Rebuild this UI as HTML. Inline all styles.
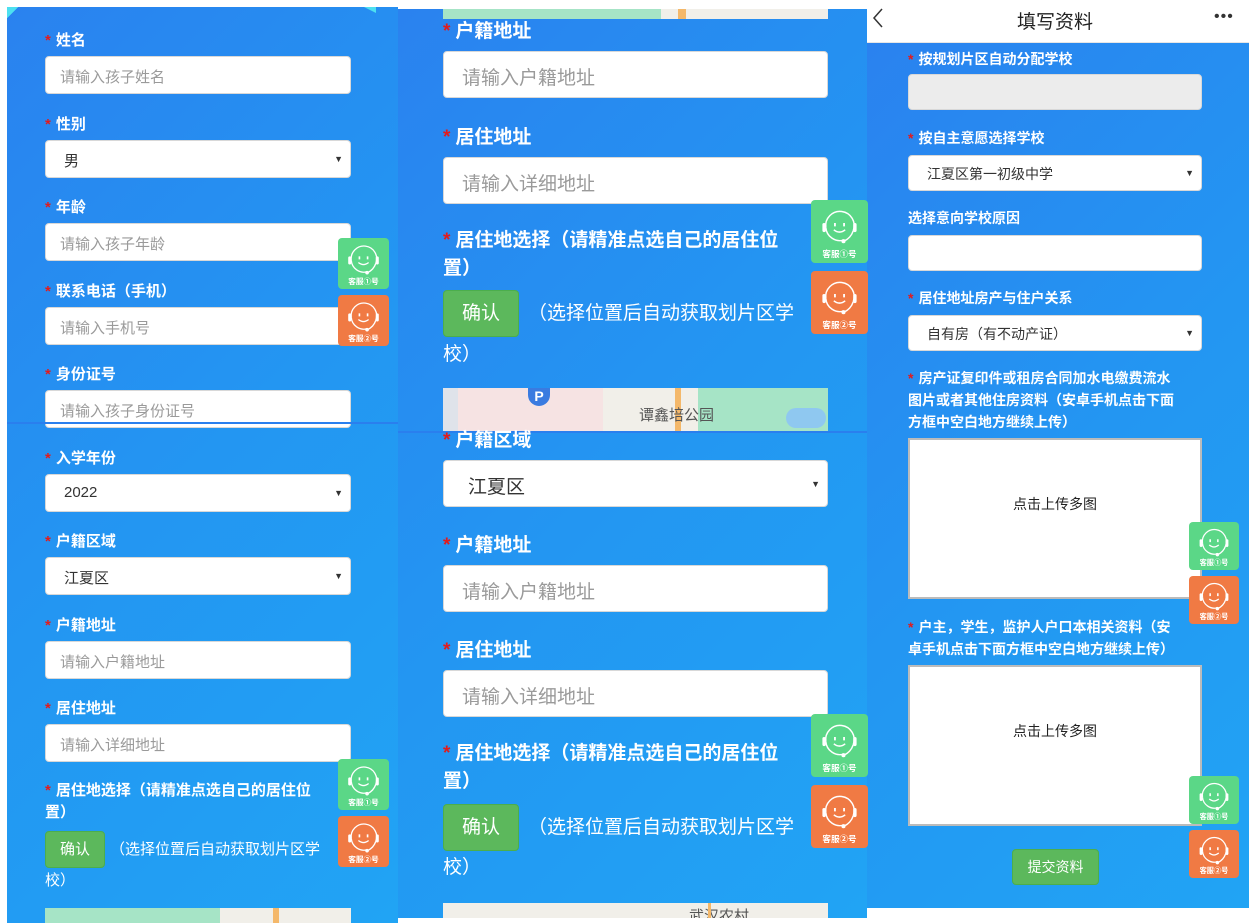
<!DOCTYPE html>
<html><head><meta charset="utf-8"><style>
*{margin:0;padding:0;box-sizing:border-box}
body{width:1249px;height:923px;background:#fff;position:relative;overflow:hidden;font-family:"Liberation Sans","Noto Sans CJK SC",sans-serif}
.p{position:absolute;background:linear-gradient(135deg,#2a82ef 0%,#2396f2 50%,#21a4f4 100%)}
.a{position:absolute;white-space:nowrap}
.l{position:absolute;color:#fff;font-weight:bold;white-space:nowrap}
.l b{color:#e31b1b;font-weight:bold;margin-right:5px}
.i{position:absolute;background:#fff;border-radius:4px;border:1px solid #d8d8d8;color:#9a9a9a;white-space:nowrap}
.s{color:#333}
.s:after{content:"▼";position:absolute;right:7px;top:50%;transform:translateY(-50%);color:#333;font-size:9px}
.btn{position:absolute;background:#5cb85c;color:#fff;border-radius:4px;border:1px solid #4cae4c;text-align:center}
.w{position:absolute;color:#fff;white-space:nowrap}
.map{position:absolute;overflow:hidden;background:#f1efe9}
.kf{position:absolute;border-radius:4px}
</style></head><body>

<!-- LEFT COLUMN -->
<div class="p" style="left:7px;top:7px;width:391px;height:916px"></div>
<div class="a" style="left:7px;top:7px;width:14px;height:14px;background:linear-gradient(135deg,#4de0f0 40%,transparent 40%)"></div>
<div class="a" style="left:364px;top:7px;width:12px;height:6px;background:#4de0f0;clip-path:polygon(0 0,100% 0,100% 100%)"></div>

<div class="l" style="left:45px;top:29px;font-size:15px"><b>*</b>姓名</div>
<div class="i" style="left:45px;top:56px;width:306px;height:38px;padding:9px 14px;font-size:15px">请输入孩子姓名</div>
<div class="l" style="left:45px;top:113px;font-size:15px"><b>*</b>性别</div>
<div class="i s" style="left:45px;top:140px;width:306px;height:38px;padding:9px 18px;font-size:15px">男</div>
<div class="l" style="left:45px;top:196px;font-size:15px"><b>*</b>年龄</div>
<div class="i" style="left:45px;top:223px;width:306px;height:38px;padding:9px 14px;font-size:15px">请输入孩子年龄</div>
<div class="l" style="left:45px;top:280px;font-size:15px"><b>*</b>联系电话（手机）</div>
<div class="i" style="left:45px;top:307px;width:306px;height:38px;padding:9px 14px;font-size:15px">请输入手机号</div>
<div class="l" style="left:45px;top:363px;font-size:15px"><b>*</b>身份证号</div>
<div class="i" style="left:45px;top:390px;width:306px;height:38px;padding:9px 14px;font-size:15px">请输入孩子身份证号</div>
<div class="a" style="left:7px;top:422px;width:391px;height:2px;background:#2a7fee"></div>
<div class="l" style="left:45px;top:447px;font-size:15px"><b>*</b>入学年份</div>
<div class="i s" style="left:45px;top:474px;width:306px;height:38px;padding:9px 18px;font-size:15px">2022</div>
<div class="l" style="left:45px;top:530px;font-size:15px"><b>*</b>户籍区域</div>
<div class="i s" style="left:45px;top:557px;width:306px;height:38px;padding:9px 18px;font-size:15px">江夏区</div>
<div class="l" style="left:45px;top:614px;font-size:15px"><b>*</b>户籍地址</div>
<div class="i" style="left:45px;top:641px;width:306px;height:38px;padding:9px 14px;font-size:15px">请输入户籍地址</div>
<div class="l" style="left:45px;top:697px;font-size:15px"><b>*</b>居住地址</div>
<div class="i" style="left:45px;top:724px;width:306px;height:38px;padding:9px 14px;font-size:15px">请输入详细地址</div>
<div class="l" style="left:45px;top:780px;font-size:15px;line-height:22px"><b>*</b>居住地选择（请精准点选自己的居住位<br>置）</div>
<div class="btn" style="left:45px;top:831px;width:60px;height:37px;line-height:35px;font-size:15px">确认</div>
<div class="w" style="left:110px;top:838px;font-size:15px">（选择位置后自动获取划片区学</div>
<div class="w" style="left:45px;top:869px;font-size:15px">校）</div>
<div class="map" style="left:45px;top:908px;width:306px;height:15px"><div class="a" style="left:0;top:0;width:175px;height:15px;background:#a6e4c6"></div><div class="a" style="left:228px;top:0;width:6px;height:15px;background:#f4b86a"></div></div>

<!-- MIDDLE COLUMN -->
<div class="p" style="left:398px;top:9px;width:469px;height:909px"></div>
<div class="map" style="left:443px;top:9px;width:385px;height:10px"><div class="a" style="left:0;top:0;width:218px;height:10px;background:#a6e4c6"></div><div class="a" style="left:235px;top:0;width:8px;height:10px;background:#f4b86a"></div></div>
<div class="l" style="left:443px;top:16px;font-size:19px"><b>*</b>户籍地址</div>
<div class="i" style="left:443px;top:51px;width:385px;height:47px;padding:11px 18px;font-size:19px">请输入户籍地址</div>
<div class="l" style="left:443px;top:122px;font-size:19px"><b>*</b>居住地址</div>
<div class="i" style="left:443px;top:157px;width:385px;height:47px;padding:11px 18px;font-size:19px">请输入详细地址</div>
<div class="l" style="left:443px;top:227px;font-size:19px;line-height:28px"><b>*</b>居住地选择（请精准点选自己的居住位<br>置）</div>
<div class="btn" style="left:443px;top:290px;width:76px;height:47px;line-height:45px;font-size:19px">确认</div>
<div class="w" style="left:528px;top:298px;font-size:19px">（选择位置后自动获取划片区学</div>
<div class="w" style="left:443px;top:339px;font-size:19px">校）</div>
<div class="map" style="left:443px;top:388px;width:385px;height:43px;background:#f6e3e3">
 <div class="a" style="left:0;top:0;width:15px;height:43px;background:#dfe3ea"></div>
 <div class="a" style="left:160px;top:0;width:110px;height:43px;background:#f1efe9"></div>
 <div class="a" style="left:255px;top:0;width:130px;height:43px;background:#a6e4c6"></div>
 <div class="a" style="left:343px;top:20px;width:40px;height:20px;background:#8fc8f0;border-radius:10px"></div>
 <div class="a" style="left:85px;top:0;width:22px;height:18px;background:#3a7be0;border-radius:0 0 11px 11px;color:#fff;font-weight:bold;font-size:14px;text-align:center">P</div>
 <div class="a" style="left:232px;top:0;width:6px;height:43px;background:#f4b86a"></div>
 <div class="a" style="left:196px;top:16px;font-size:15px;color:#555">谭鑫培公园</div>
</div>
<div class="a" style="left:398px;top:431px;width:469px;height:2px;background:#2a7fee"></div>
<div class="l" style="left:443px;top:425px;font-size:19px"><b>*</b>户籍区域</div>
<div class="i s" style="left:443px;top:460px;width:385px;height:47px;padding:11px 24px;font-size:19px">江夏区</div>
<div class="l" style="left:443px;top:530px;font-size:19px"><b>*</b>户籍地址</div>
<div class="i" style="left:443px;top:565px;width:385px;height:47px;padding:11px 18px;font-size:19px">请输入户籍地址</div>
<div class="l" style="left:443px;top:635px;font-size:19px"><b>*</b>居住地址</div>
<div class="i" style="left:443px;top:670px;width:385px;height:47px;padding:11px 18px;font-size:19px">请输入详细地址</div>
<div class="l" style="left:443px;top:740px;font-size:19px;line-height:28px"><b>*</b>居住地选择（请精准点选自己的居住位<br>置）</div>
<div class="btn" style="left:443px;top:804px;width:76px;height:47px;line-height:45px;font-size:19px">确认</div>
<div class="w" style="left:528px;top:812px;font-size:19px">（选择位置后自动获取划片区学</div>
<div class="w" style="left:443px;top:852px;font-size:19px">校）</div>
<div class="map" style="left:443px;top:903px;width:385px;height:15px"><div class="a" style="left:246px;top:2px;font-size:15px;color:#555">武汉农村</div><div class="a" style="left:265px;top:0;width:3px;height:15px;background:#f4b86a"></div></div>

<!-- RIGHT COLUMN -->
<div class="p" style="left:867px;top:43px;width:382px;height:865px"></div>
<div class="a" style="left:867px;top:0;width:382px;height:43px;background:#fff;border-bottom:1px solid #e6e6e6"></div>
<svg class="a" style="left:870px;top:7px" width="16" height="22"><path d="M12 2 L4 11 L12 20" fill="none" stroke="#333" stroke-width="1.5"/></svg>
<div class="a" style="left:1017px;top:7px;font-size:19px;color:#222">填写资料</div>
<div class="a" style="left:1214px;top:8px;font-size:16px;color:#333;letter-spacing:1px">•••</div>

<div class="l" style="left:908px;top:49px;font-size:14px"><b>*</b>按规划片区自动分配学校</div>
<div class="i" style="left:908px;top:74px;width:294px;height:36px;background:#ececec"></div>
<div class="l" style="left:908px;top:128px;font-size:14px"><b>*</b>按自主意愿选择学校</div>
<div class="i s" style="left:908px;top:155px;width:294px;height:36px;padding:8px 18px;font-size:14px">江夏区第一初级中学</div>
<div class="l" style="left:908px;top:208px;font-size:14px">选择意向学校原因</div>
<div class="i" style="left:908px;top:235px;width:294px;height:36px"></div>
<div class="l" style="left:908px;top:288px;font-size:14px"><b>*</b>居住地址房产与住户关系</div>
<div class="i s" style="left:908px;top:315px;width:294px;height:36px;padding:8px 18px;font-size:14px">自有房（有不动产证）</div>
<div class="l" style="left:908px;top:367px;font-size:14px;line-height:22px"><b>*</b>房产证复印件或租房合同加水电缴费流水<br>图片或者其他住房资料（安卓手机点击下面<br>方框中空白地方继续上传）</div>
<div class="a" style="left:908px;top:438px;width:294px;height:161px;background:#fff;border:2px solid #bbb;font-size:14px;color:#222;text-align:center;padding-top:54px">点击上传多图</div>
<div class="l" style="left:908px;top:616px;font-size:14px;line-height:22px"><b>*</b>户主，学生，监护人户口本相关资料（安<br>卓手机点击下面方框中空白地方继续上传）</div>
<div class="a" style="left:908px;top:665px;width:294px;height:161px;background:#fff;border:2px solid #bbb;font-size:14px;color:#222;text-align:center;padding-top:54px">点击上传多图</div>
<div class="btn" style="left:1012px;top:849px;width:87px;height:36px;line-height:34px;font-size:14px">提交资料</div>

<!-- service buttons -->
<svg width="0" height="0" style="position:absolute"><defs>
<g id="face" fill="none" stroke="#fff" stroke-width="1.3">
<path d="M13 22 A12.5 12.5 0 1 1 37 25"/>
<path d="M13 22 A12.5 12.5 0 0 0 29 33"/>
<path d="M37 25 Q35 31 29 34"/>
<rect x="10" y="18" width="3" height="8" rx="1.5" fill="#fff" stroke="none"/>
<rect x="37" y="18" width="3" height="8" rx="1.5" fill="#fff" stroke="none"/>
<path d="M20 24 Q25 28 30 24"/>
<path d="M21 18 v3 M29 18 v3" stroke-width="1.6"/>
<circle cx="28.5" cy="34" r="1.8" fill="#fff" stroke="none"/>
</g></defs></svg>

<div class="kf" style="left:338px;top:238px;width:51px;height:51px;background:#5bd787"><svg width="51" height="51" viewBox="0 0 50 50"><use href="#face"/><text x="25" y="45" fill="#fff" font-size="7.5" font-weight="bold" text-anchor="middle" font-family="Noto Sans CJK SC,sans-serif">客服①号</text></svg></div>
<div class="kf" style="left:338px;top:295px;width:51px;height:51px;background:#f07a44"><svg width="51" height="51" viewBox="0 0 50 50"><use href="#face"/><text x="25" y="45" fill="#fff" font-size="7.5" font-weight="bold" text-anchor="middle" font-family="Noto Sans CJK SC,sans-serif">客服②号</text></svg></div>
<div class="kf" style="left:338px;top:759px;width:51px;height:51px;background:#5bd787"><svg width="51" height="51" viewBox="0 0 50 50"><use href="#face"/><text x="25" y="45" fill="#fff" font-size="7.5" font-weight="bold" text-anchor="middle" font-family="Noto Sans CJK SC,sans-serif">客服①号</text></svg></div>
<div class="kf" style="left:338px;top:816px;width:51px;height:51px;background:#f07a44"><svg width="51" height="51" viewBox="0 0 50 50"><use href="#face"/><text x="25" y="45" fill="#fff" font-size="7.5" font-weight="bold" text-anchor="middle" font-family="Noto Sans CJK SC,sans-serif">客服②号</text></svg></div>

<div class="kf" style="left:811px;top:200px;width:57px;height:63px;background:#5bd787"><svg width="57" height="63" viewBox="0 0 50 55"><use href="#face" transform="translate(0,2)"/><text x="25" y="50" fill="#fff" font-size="7.5" font-weight="bold" text-anchor="middle" font-family="Noto Sans CJK SC,sans-serif">客服①号</text></svg></div>
<div class="kf" style="left:811px;top:271px;width:57px;height:63px;background:#f07a44"><svg width="57" height="63" viewBox="0 0 50 55"><use href="#face" transform="translate(0,2)"/><text x="25" y="50" fill="#fff" font-size="7.5" font-weight="bold" text-anchor="middle" font-family="Noto Sans CJK SC,sans-serif">客服②号</text></svg></div>
<div class="kf" style="left:811px;top:714px;width:57px;height:63px;background:#5bd787"><svg width="57" height="63" viewBox="0 0 50 55"><use href="#face" transform="translate(0,2)"/><text x="25" y="50" fill="#fff" font-size="7.5" font-weight="bold" text-anchor="middle" font-family="Noto Sans CJK SC,sans-serif">客服①号</text></svg></div>
<div class="kf" style="left:811px;top:785px;width:57px;height:63px;background:#f07a44"><svg width="57" height="63" viewBox="0 0 50 55"><use href="#face" transform="translate(0,2)"/><text x="25" y="50" fill="#fff" font-size="7.5" font-weight="bold" text-anchor="middle" font-family="Noto Sans CJK SC,sans-serif">客服②号</text></svg></div>

<div class="kf" style="left:1189px;top:522px;width:50px;height:48px;background:#5bd787"><svg width="50" height="48" viewBox="0 0 50 50"><use href="#face"/><text x="25" y="45" fill="#fff" font-size="7.5" font-weight="bold" text-anchor="middle" font-family="Noto Sans CJK SC,sans-serif">客服①号</text></svg></div>
<div class="kf" style="left:1189px;top:576px;width:50px;height:48px;background:#f07a44"><svg width="50" height="48" viewBox="0 0 50 50"><use href="#face"/><text x="25" y="45" fill="#fff" font-size="7.5" font-weight="bold" text-anchor="middle" font-family="Noto Sans CJK SC,sans-serif">客服②号</text></svg></div>
<div class="kf" style="left:1189px;top:776px;width:50px;height:48px;background:#5bd787"><svg width="50" height="48" viewBox="0 0 50 50"><use href="#face"/><text x="25" y="45" fill="#fff" font-size="7.5" font-weight="bold" text-anchor="middle" font-family="Noto Sans CJK SC,sans-serif">客服①号</text></svg></div>
<div class="kf" style="left:1189px;top:830px;width:50px;height:48px;background:#f07a44"><svg width="50" height="48" viewBox="0 0 50 50"><use href="#face"/><text x="25" y="45" fill="#fff" font-size="7.5" font-weight="bold" text-anchor="middle" font-family="Noto Sans CJK SC,sans-serif">客服②号</text></svg></div>

</body></html>
